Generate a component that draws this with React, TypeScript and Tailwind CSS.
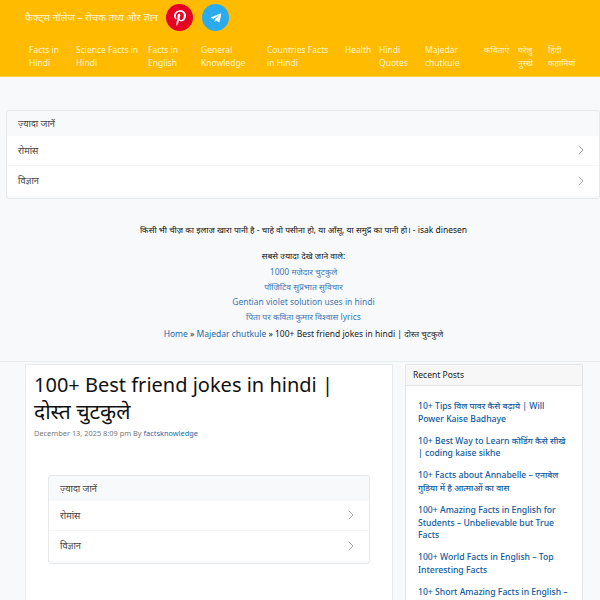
import { FaPinterestP, FaTelegramPlane } from 'react-icons/fa';
import { ChevronRight } from 'lucide-react';

const navItems = [
  { label: 'Facts in Hindi', width: 'w-[47px]' },
  { label: 'Science Facts in Hindi', width: 'w-[72px]' },
  { label: 'Facts in English', width: 'w-[53px]' },
  { label: 'General Knowledge', width: 'w-[66px]' },
  { label: 'Countries Facts in Hindi', width: 'w-[78px] pr-[12px]' },
  { label: 'Health', width: 'w-[34px]' },
  { label: 'Hindi Quotes', width: 'w-[46px]' },
  { label: 'Majedar chutkule', width: 'w-[59px]' },
  { label: 'कविताएं', width: 'w-[34px]' },
  { label: 'घरेलु नुस्खे', width: 'w-[30px]' },
  { label: 'हिंदी कहानियां', width: 'w-[34px]' },
];

const popular = [
  '1000 मजेदार चुटकुले',
  'पॉजिटिव सुप्रभात सुविचार',
  'Gentian violet solution uses in hindi',
  'पिता पर कविता कुमार विश्वास lyrics',
];

const recentPosts = [
  '10+ Tips विल पावर कैसे बढ़ाये | Will Power Kaise Badhaye',
  '10+ Best Way to Learn कोडिंग कैसे सीखे | coding kaise sikhe',
  '10+ Facts about Annabelle – एनाबेल गुड़िया में है आत्माओं का वास',
  '100+ Amazing Facts in English for Students – Unbelievable but True Facts',
  '100+ World Facts in English – Top Interesting Facts',
  '10+ Short Amazing Facts in English –',
];

const MoreBox = () => (
  <div className="border border-[#e6e8ea] rounded-[3px] bg-[#f8f9fa] pb-[2px] text-[#444] text-[9.2px]">
    <div className="h-[25px] pl-[11px] flex items-center">ज़्यादा जानें</div>
    {['रोमांस', 'विज्ञान'].map((t) => (
      <div
        key={t}
        className="h-[30px] pl-[11px] pr-[10px] flex items-center justify-between bg-white border-b border-[#f5f5f5] last:border-b-0"
      >
        <span>{t}</span>
        <ChevronRight size={16} strokeWidth={1.1} className="text-[#888] -mt-[1px]" />
      </div>
    ))}
  </div>
);

export default function App() {
  return (
    <div className="h-[600px] overflow-hidden bg-[#f8f9fa] font-['Noto_Sans',sans-serif] text-[#111]">
      <header className="h-[77px] bg-[#ffbb00] border-b border-[#ffd54f]">
        <div className="pl-[25px] pt-[4px] flex items-center h-[31px]">
          <span className="text-[10px] whitespace-nowrap text-[#fff4d0] w-[141px]">
            फैक्ट्स नॉलेज – रोचक तथ्य और ज्ञान
          </span>
          <span className="w-[27px] h-[27px] rounded-full bg-[#e60023] flex items-center justify-center text-white">
            <FaPinterestP size={16} />
          </span>
          <span className="ml-[9px] w-[27px] h-[27px] rounded-full bg-[#2aabee] flex items-center justify-center text-white">
            <FaTelegramPlane size={12} />
          </span>
        </div>
        <nav className="flex pl-[29px] pt-[12px] text-[8.5px] leading-[13px] text-[#fff4d0]">
          {navItems.map((item) => (
            <a key={item.label} className={item.width}>
              {item.label}
            </a>
          ))}
        </nav>
      </header>

      <div className="pl-[6px] pt-[33px]">
        <MoreBox />
      </div>

      <section className="mt-[23px] pl-[7px] text-center text-[8.5px] leading-[15.3px] h-[140px] border-b border-[#e8ecef]">
        <p>किसी भी चीज़ का इलाज खारा पानी है - चाहे वो पसीना हो, या आँसू, या समुद्र का पानी हो। - isak dinesen</p>
        <p className="mt-[11px]">सबसे ज्यादा देखे जाने वाले:</p>
        {popular.map((p) => (
          <p key={p} className="text-[#3b78b5]">
            {p}
          </p>
        ))}
        <p className="mt-[1px] text-[#222]">
          <span className="text-[#1e6aa8]">Home</span> » <span className="text-[#1e6aa8]">Majedar chutkule</span> » 100+
          Best friend jokes in hindi | दोस्त चुटकुले
        </p>
      </section>

      <main className="flex items-start pl-[25px] pt-[2px]">
        <article className="w-[368px] h-[300px] bg-white border border-[#e8eaed] pl-[8px] pr-[8px] pt-[7px]">
          <h1 className="text-[20px] leading-[26px] text-[#111] max-w-[310px]">
            100+ Best friend jokes in hindi | <span className="text-[21px]">दोस्त चुटकुले</span>
          </h1>
          <p className="mt-[3px] text-[7.4px] text-[#777]">
            December 13, 2025 8:09 pm By <span className="text-[#1e6aa8]">factsknowledge</span>
          </p>
          <div className="mt-[36px] mx-[14px]">
            <MoreBox />
          </div>
        </article>

        <aside className="ml-[12px] w-[178px] h-[300px] bg-white border border-[#e3e5e7] rounded-[2px]">
          <div className="h-[21px] bg-[#f7f7f7] border-b border-[#e3e5e7] pl-[7px] flex items-center text-[8.5px] text-[#222]">
            Recent Posts
          </div>
          <ul className="pl-[12px] pr-[12px] pt-[14px] flex flex-col gap-[9px] text-[8.65px] leading-[12.8px] font-medium text-[#0f5a9e]">
            {recentPosts.map((post) => (
              <li key={post}>{post}</li>
            ))}
          </ul>
        </aside>
      </main>
    </div>
  );
}
